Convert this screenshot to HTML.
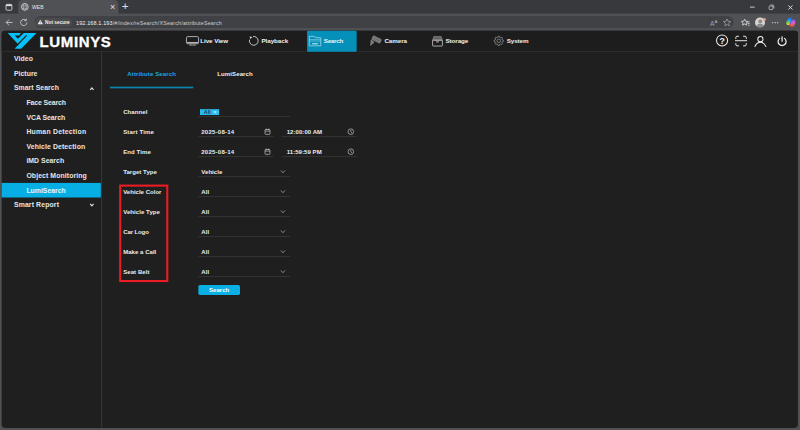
<!DOCTYPE html>
<html lang="en">
<head>
<meta charset="utf-8">
<title>WEB</title>
<style>
*{box-sizing:border-box;margin:0;padding:0}
html,body{width:800px;height:430px;overflow:hidden;background:#505155}
body{font-family:"Liberation Sans",sans-serif}
#root{position:absolute;left:0;top:0;width:1920px;height:1032px;transform:scale(0.4166667);transform-origin:0 0;background:#505155;overflow:hidden}
.abs{position:absolute}
/* browser chrome */
#tabstrip{left:0;top:0;width:1920px;height:33px;background:#38393c}
#tabicon{left:0;top:0;width:44px;height:32px}
#tab{left:44px;top:0;width:240px;height:34px;background:#505155;border-radius:10px 10px 0 0}
#toolbar{left:0;top:33px;width:1920px;height:43px;background:#505155}
#urlbar{left:81px;top:37px;width:1681px;height:32px;border-radius:16px;background:#404145;border:1.500px solid #5b5c60}
.ctext{color:#e8e8e8;font-size:14px;white-space:nowrap}
/* page */
#page{left:4.400px;top:74.400px;width:1910.400px;height:952.600px;background:#1f1f1f;border-radius:8px}
#header{left:4.400px;top:74.400px;width:1910.400px;height:49.600px;background:#1d1d1d;border-bottom:2.200px solid #3a3c3e;border-radius:8px 8px 0 0}
#side{left:4.400px;top:124px;width:240.300px;height:903px;border-right:2.400px solid #3b3d3f}
#brand{left:95px;top:80.500px;height:40px;line-height:40px;font-size:36px;font-weight:bold;color:#fff;letter-spacing:1.5px;-webkit-text-stroke:.7px #fff;white-space:nowrap}
#navact{left:736.500px;top:74px;width:119.500px;height:49.500px;background:#0590ba;border-radius:3px}
.tab{top:144.500px;width:200px;height:66px;line-height:66px;text-align:center;font-size:14.5px;font-weight:bold;letter-spacing:.25px;white-space:nowrap}
#redbox{left:285.800px;top:443.300px;width:118.500px;height:233.800px;border:5px solid #ec1c24}
#btn{left:476px;top:684px;width:100px;height:24px;line-height:24px;border-radius:4px;background:#0aafe4;color:#fff;font-size:14.5px;font-weight:bold;text-align:center}
.si{position:absolute;left:4.400px;width:237.800px;height:35px;line-height:35px;color:#e6e6e6;font-size:16.5px;font-weight:bold;letter-spacing:.3px;white-space:nowrap}
.si.l1{padding-left:29px}
.si.l2{padding-left:59px}
.si.act{background:#06aee3;color:#e8f7fd}
.nav{position:absolute;top:74px;height:50px;line-height:50px;color:#f0f0f0;font-size:15px;font-weight:bold;letter-spacing:-.15px;white-space:nowrap}
.lbl{position:absolute;left:295.5px;color:#ececec;font-size:14.5px;font-weight:bold;white-space:nowrap;height:20px;line-height:20px;letter-spacing:.1px}
.fld{position:absolute;height:28px;border-bottom:2px solid #3a3a3a}
.fld span{position:absolute;left:7px;top:5px;line-height:20px;font-size:14.5px;font-weight:bold;color:#ececec;white-space:nowrap;letter-spacing:.1px}
svg{position:absolute;overflow:visible}
</style>
</head>
<body>
<div id="root">
  <!-- browser chrome -->
  <div id="tabstrip" class="abs"></div>
  <div id="tab" class="abs"></div>
  <div id="toolbar" class="abs"></div>
  <div id="urlbar" class="abs"></div>
  <div id="chrome-items">
    <!-- tab actions icon -->
    <svg style="left:13px;top:8.500px" width="17" height="17" viewBox="0 0 18 18"><rect x="1.5" y="1.5" width="15" height="15" rx="3" fill="none" stroke="#e4e4e4" stroke-width="2"/><rect x="2" y="2" width="14" height="4" fill="#e4e4e4"/></svg>
    <!-- globe -->
    <svg style="left:50px;top:7px" width="19" height="19" viewBox="0 0 20 20"><circle cx="10" cy="10" r="8.600" fill="none" stroke="#e8e8e8" stroke-width="1.700"/><ellipse cx="10" cy="10" rx="3.800" ry="8.600" fill="none" stroke="#d8d8d8" stroke-width="1.100"/><path d="M1.500 10h17M3 5.800h14M3 14.200h14" stroke="#d8d8d8" stroke-width="1.100"/></svg>
    <div class="abs ctext" style="left:77px;top:8px;font-size:12px;line-height:18px">WEB</div>
    <div class="abs ctext" style="left:264px;top:3px;font-size:22px;line-height:26px;color:#e0e0e0">&#215;</div>
    <div class="abs ctext" style="left:292px;top:0px;font-size:28px;line-height:30px;color:#e0e0e0;font-weight:normal">+</div>
    <!-- back / reload -->
    <svg style="left:12px;top:44px" width="20" height="20" viewBox="0 0 20 20"><path d="M10 3L3 10l7 7M3 10h15" fill="none" stroke="#dcdcdc" stroke-width="1.8"/></svg>
    <svg style="left:46px;top:43px" width="22" height="22" viewBox="0 0 22 22"><path d="M18.5 11a7.5 7.5 0 1 1-2.4-5.5" fill="none" stroke="#dcdcdc" stroke-width="1.8"/><path d="M17 1.5v5h-5" fill="none" stroke="#dcdcdc" stroke-width="1.8"/></svg>
    <!-- not secure -->
    <div class="abs" style="left:84px;top:43px;width:89px;height:21px;border-radius:11px;background:#4a4b4f"></div>
    <svg style="left:89.500px;top:46px" width="13.500" height="13.500" viewBox="0 0 16 15"><path d="M8 1L15.5 14H0.5Z" fill="#f0f0f0"/><path d="M8 5.5v4.5M8 11.3v1.5" stroke="#4a4b4f" stroke-width="1.6"/></svg>
    <div class="abs ctext" style="left:108px;top:44px;font-size:11.5px;line-height:19px;font-weight:bold;color:#ececec">Not secure</div>
    <div class="abs ctext" style="left:182.500px;top:44.800px;font-size:13px;letter-spacing:.37px;line-height:19px;color:#f2f2f2">192.168.1.193<span style="color:#cdcdd0">/#/index/reSearch/XSearch/attributeSearch</span></div>
    <!-- right toolbar icons -->
    <div class="abs ctext" style="left:1704px;top:43px;font-size:16px;line-height:20px;color:#a4a4a7">A<span style="font-size:10px;vertical-align:6px;font-weight:bold">A</span></div>
    <svg style="left:1734px;top:43px" width="22" height="22" viewBox="0 0 22 22"><path d="M11 2.500l2.600 5.600 6 .700-4.500 4.100 1.200 6-5.300-3-5.300 3 1.200-6L2.400 8.800l6-.700z" fill="none" stroke="#a9a9ac" stroke-width="1.700" stroke-linejoin="round"/></svg>
    <svg style="left:1776px;top:43px" width="24" height="22" viewBox="0 0 24 22"><path d="M11 3l2.300 4.900 5.300.600-4 3.600 1.100 5.300-4.700-2.700-4.700 2.700 1.100-5.300-4-3.600 5.300-.600z" fill="none" stroke="#e4e4e4" stroke-width="1.900" stroke-linejoin="round"/><path d="M17 9.500h6M18 13.500h5M19 17.500h4" stroke="#e4e4e4" stroke-width="1.900"/></svg>
    <div class="abs" style="left:1812px;top:42px;width:24px;height:24px;border-radius:12px;background:#d6d2cf;overflow:hidden"><div class="abs" style="left:7.500px;top:4.500px;width:9px;height:9px;border-radius:5px;background:#8c8987"></div><div class="abs" style="left:3.500px;top:15px;width:17px;height:14px;border-radius:8px 8px 0 0;background:#8c8987"></div></div>
    <div class="abs" style="left:1831px;top:42.500px;width:7px;height:7px;border-radius:4px;background:#f29a8e"></div>
    <div class="abs" style="left:1853px;top:52.500px;width:3.200px;height:3.200px;border-radius:2px;background:#e0e0e0;box-shadow:6px 0 0 #e0e0e0,12px 0 0 #e0e0e0"></div>
    <svg style="left:1886px;top:42px" width="24" height="23" viewBox="0 0 24 23"><defs><linearGradient id="cpa" x1="0" y1="0" x2="0" y2="1"><stop offset="0" stop-color="#1a6cf0"/><stop offset=".4" stop-color="#22b0e0"/><stop offset=".65" stop-color="#5ccf50"/><stop offset="1" stop-color="#f4d21c"/></linearGradient><linearGradient id="cpb" x1="0" y1="0" x2="0" y2="1"><stop offset="0" stop-color="#8f5cf6"/><stop offset=".5" stop-color="#e45cc4"/><stop offset="1" stop-color="#f4582c"/></linearGradient></defs><path d="M7.500 2h7l-4.500 14.500H3.500L2 12z" fill="url(#cpa)" stroke="url(#cpa)" stroke-width="2.500" stroke-linejoin="round"/><path d="M14.500 6.500h6L22 11l-3.500 9.500h-7L10 18.500z" fill="url(#cpb)" stroke="url(#cpb)" stroke-width="2.500" stroke-linejoin="round"/><path d="M14 3.500L9.500 18" stroke="#1f58c8" stroke-width="1.600" fill="none"/></svg>
    <!-- window controls -->
    <div class="abs" style="left:1800px;top:15.500px;width:11px;height:2px;background:#e4e4e4"></div>
    <svg style="left:1845px;top:11px" width="13" height="13" viewBox="0 0 14 14"><rect x="1" y="3.500" width="9.500" height="9.500" rx="2" fill="none" stroke="#e4e4e4" stroke-width="1.700"/><path d="M4 1.200h6.500a2.500 2.500 0 0 1 2.500 2.500V10" fill="none" stroke="#e4e4e4" stroke-width="1.700"/></svg>
    <svg style="left:1891px;top:11.500px" width="12" height="12" viewBox="0 0 12 12"><path d="M1 1l10 10M11 1L1 11" stroke="#f4f4f4" stroke-width="2"/></svg>
  </div>

  <!-- page -->
  <div id="page" class="abs"></div>
  <div id="header" class="abs"></div>
  <div id="side" class="abs"></div>
  <div id="hdr">
    <!-- logo -->
    <svg style="left:14.4px;top:74.4px" width="81.6" height="48" viewBox="0 0 731 430"><polygon points="40,45 660,45 330,385 190,385 268,297 250,272" fill="#05c3fa"/><polygon points="328,40 392,40 260,172 192,98 287,98" fill="#1d1d1d"/><path d="M447,98L235,316" stroke="#1d1d1d" stroke-width="26"/></svg>
    <div class="abs" id="brand">LUMINYS</div>
    <div class="abs" id="navact"></div>
    <!-- nav icons -->
    <svg style="left:446px;top:85px" width="32" height="26" viewBox="0 0 32 26"><rect x="1.500" y="2.800" width="29" height="17.200" rx="3" fill="none" stroke="#c4c4c4" stroke-width="2"/><path d="M2 17.300h28" stroke="#c4c4c4" stroke-width="2.600"/><path d="M8 23.500h16M12 20v3.500M20 20v3.500" stroke="#b0b0b0" stroke-width="1.600"/></svg>
    <svg style="left:595.900px;top:85.300px" width="26" height="26" viewBox="0 0 26 26"><path d="M11.2,2.7A10.5,10.5 0 1 1 2.9,10.3" fill="none" stroke="#d2d2d2" stroke-width="2.200"/><path d="M3 2.500l6.500 1-4.500 5z" fill="#e0e0e0"/></svg>
    <svg style="left:741px;top:85.500px" width="30" height="26" viewBox="0 0 30 26"><path d="M1.200 24V1.200h12.300l2.500 3.300h12.800V24z" fill="none" stroke="#a9dced" stroke-width="1.800" stroke-linejoin="round"/><path d="M1.200 9h27.600M1.200 12.500h27.600" stroke="#a9dced" stroke-width="1.200"/><path d="M8 19h14" stroke="#a9dced" stroke-width="3"/></svg>
    <svg style="left:887px;top:85px" width="30" height="26" viewBox="0 0 30 26"><g transform="rotate(27 17 9.500)"><rect x="6.500" y="5" width="21" height="9.500" rx="1" fill="#555" stroke="#a2a2a2" stroke-width="1.500"/><path d="M7 8.200h20M7 11.400h20" stroke="#b0b0b0" stroke-width="1.100"/></g><path d="M3.500 10.500l-1 13.500 8.500-7.500z" fill="#777" stroke="#9a9a9a" stroke-width="1.200" stroke-linejoin="round"/></svg>
    <svg style="left:1037px;top:85.500px" width="26" height="26" viewBox="0 0 26 26"><path d="M4.500 1.500h17l3.300 9H1.200z" fill="#4c4c4c" stroke="#a8a8a8" stroke-width="1.300" stroke-linejoin="round"/><path d="M3.500 4.700h19M2.500 7.700h21" stroke="#a0a0a0" stroke-width="1"/><rect x="1.200" y="10.500" width="23.600" height="14" rx="1.500" fill="none" stroke="#c4c4c4" stroke-width="2"/><path d="M9.500 14.500h7" stroke="#c4c4c4" stroke-width="2.200"/></svg>
    <svg style="left:1184px;top:85.200px" width="26" height="26" viewBox="0 0 26 26"><path d="M21.6,10.9L24.2,11.5L24.2,14.5L21.6,15.1L20.5,17.6L22.0,19.9L19.9,22.0L17.6,20.5L15.1,21.6L14.5,24.2L11.5,24.2L10.9,21.6L8.4,20.5L6.1,22.0L4.0,19.9L5.5,17.6L4.4,15.1L1.8,14.5L1.8,11.5L4.4,10.9L5.5,8.4L4.0,6.1L6.1,4.0L8.4,5.5L10.9,4.4L11.5,1.8L14.5,1.8L15.1,4.4L17.6,5.5L19.9,4.0L22.0,6.1L20.5,8.4Z" fill="none" stroke="#a8a8a8" stroke-width="1.500" stroke-linejoin="round"/><circle cx="13" cy="13" r="4.200" fill="none" stroke="#a8a8a8" stroke-width="1.500"/></svg>
    <!-- right icons -->
    <svg style="left:1718px;top:82.200px" width="30" height="30" viewBox="0 0 30 30"><circle cx="15" cy="15" r="13.300" fill="none" stroke="#f2f2f2" stroke-width="2.400"/><text x="15" y="22.500" text-anchor="middle" font-family="Liberation Sans, sans-serif" font-weight="bold" font-size="21" fill="#f2f2f2">?</text></svg>
    <svg style="left:1764px;top:84.500px" width="29" height="27" viewBox="0 0 29 27"><g fill="none" stroke="#f0f0f0" stroke-width="2.300"><path d="M2 8.500V5a3 3 0 0 1 3-3h4.500M19.500 2H24a3 3 0 0 1 3 3v3.500M27 18.500V22a3 3 0 0 1-3 3h-4.500M9.500 25H5a3 3 0 0 1-3-3v-3.500"/><path d="M0 12.700h29"/></g></svg>
    <svg style="left:1810px;top:86px" width="30" height="27" viewBox="0 0 30 27"><g fill="none" stroke="#f0f0f0" stroke-width="2.400" stroke-linecap="round"><circle cx="15" cy="8" r="6.300"/><path d="M1.800 25.500C5 18.500 10 15.600 15 15.600s10 2.900 13.200 9.900"/></g></svg>
    <svg style="left:1864px;top:86px" width="26" height="26" viewBox="0 0 26 26"><g fill="none" stroke="#f0f0f0" stroke-width="3" stroke-linecap="round"><path d="M18.9,6.1A9.6,9.6 0 1 1 7.1,6.1"/><path d="M13 2.200v10.500"/></g></svg>
    <!-- nav -->
    <div class="nav" style="left:480.5px">Live View</div>
    <div class="nav" style="left:627.5px">Playback</div>
    <div class="nav" style="left:777px;letter-spacing:-.65px">Search</div>
    <div class="nav" style="left:922.5px">Camera</div>
    <div class="nav" style="left:1069px">Storage</div>
    <div class="nav" style="left:1216px">System</div>
  </div>
  <div id="sidebar">
    <div class="si l1" style="top:124px;letter-spacing:0.29px">Video</div>
    <div class="si l1" style="top:159px;letter-spacing:0.08px">Picture</div>
    <div class="si l1" style="top:194px;letter-spacing:0.15px">Smart Search</div>
    <div class="si l2" style="top:229px;letter-spacing:-0.22px">Face Search</div>
    <div class="si l2" style="top:264px;letter-spacing:-0.1px">VCA Search</div>
    <div class="si l2" style="top:299px;letter-spacing:0.54px">Human Detection</div>
    <div class="si l2" style="top:334px;letter-spacing:0.27px">Vehicle Detection</div>
    <div class="si l2" style="top:369px;letter-spacing:0.07px">iMD Search</div>
    <div class="si l2" style="top:404px;letter-spacing:0.22px">Object Monitoring</div>
    <div class="si l2 act" style="top:439px;letter-spacing:-0.02px">LumiSearch</div>
    <div class="si l1" style="top:474px;letter-spacing:0.32px">Smart Report</div>
    <svg style="left:215px;top:207.500px" width="11" height="9" viewBox="0 0 11 9"><path d="M1.500 7.500l4-4.500 4 4.500" fill="none" stroke="#e0e0e0" stroke-width="2.800"/></svg>
    <svg style="left:215px;top:487.500px" width="11" height="9" viewBox="0 0 11 9"><path d="M1.500 1.500l4 4.500 4-4.500" fill="none" stroke="#e0e0e0" stroke-width="2.800"/></svg>
  </div>
  <div id="content">
    <div class="abs tab" style="left:264px;color:#19a8dc">Attribute Search</div>
    <div class="abs tab" style="left:464px;color:#f0f0f0">LumiSearch</div>
    <div class="abs" style="left:264px;top:208.400px;width:200px;height:4px;background:#0c88b0"></div>
    <div class="lbl" style="top:257.5px;letter-spacing:0.17px">Channel</div>
    <div class="lbl" style="top:305.5px;letter-spacing:0.36px">Start Time</div>
    <div class="lbl" style="top:353.5px;letter-spacing:0.19px">End Time</div>
    <div class="lbl" style="top:401.5px;letter-spacing:0.1px">Target Type</div>
    <div class="lbl" style="top:449.5px;letter-spacing:0.01px">Vehicle Color</div>
    <div class="lbl" style="top:497.5px;letter-spacing:0.14px">Vehicle Type</div>
    <div class="lbl" style="top:545.5px;letter-spacing:-0.26px">Car Logo</div>
    <div class="lbl" style="top:593.5px;letter-spacing:0.06px">Make a Call</div>
    <div class="lbl" style="top:641.5px;letter-spacing:0.15px">Seat Belt</div>
    <div class="fld" style="left:476px;top:252.5px;width:220px"><div class="abs" style="left:4px;top:9px;width:46px;height:14px;background:#2abcee"></div><span style="left:13px;top:6px;color:#1d3b4c;font-size:13px">All</span><span style="left:35.500px;top:5px;color:#f4fcff;font-size:14px;font-weight:normal">&#215;</span></div>
    <div class="fld" style="left:476px;top:300.5px;width:180px"><span style="letter-spacing:.55px">2025-08-14</span><svg style="left:159px;top:7.500px" width="14" height="15.500" viewBox="0 0 14 14" preserveAspectRatio="none"><rect x="1" y="2.500" width="12" height="10.500" rx="2" fill="none" stroke="#d0d0d0" stroke-width="1.500"/><path d="M1 6h12M4 0.500v3M10 0.500v3" stroke="#d0d0d0" stroke-width="1.500"/></svg></div>
    <div class="fld" style="left:676px;top:300.5px;width:180px"><span style="left:12px">12:00:00 AM</span><svg style="left:158px;top:7.500px" width="16" height="16" viewBox="0 0 16 16"><circle cx="8" cy="8" r="6.700" fill="none" stroke="#d0d0d0" stroke-width="1.500"/><path d="M8 4v4.300l2.800 2.800" fill="none" stroke="#d0d0d0" stroke-width="1.500"/></svg></div>
    <div class="fld" style="left:476px;top:348.5px;width:180px"><span style="letter-spacing:.55px">2025-08-14</span><svg style="left:159px;top:7.500px" width="14" height="15.500" viewBox="0 0 14 14" preserveAspectRatio="none"><rect x="1" y="2.500" width="12" height="10.500" rx="2" fill="none" stroke="#d0d0d0" stroke-width="1.500"/><path d="M1 6h12M4 0.500v3M10 0.500v3" stroke="#d0d0d0" stroke-width="1.500"/></svg></div>
    <div class="fld" style="left:676px;top:348.5px;width:180px"><span style="left:12px">11:59:59 PM</span><svg style="left:158px;top:7.500px" width="16" height="16" viewBox="0 0 16 16"><circle cx="8" cy="8" r="6.700" fill="none" stroke="#d0d0d0" stroke-width="1.500"/><path d="M8 4v4.300l2.800 2.800" fill="none" stroke="#d0d0d0" stroke-width="1.500"/></svg></div>
    <div class="fld" style="left:476px;top:396.5px;width:220px"><span>Vehicle</span><svg style="left:197px;top:11.500px" width="12" height="8" viewBox="0 0 12 8"><path d="M1 1l5 5.500 5-5.500" fill="none" stroke="#c8c8c8" stroke-width="1.500"/></svg></div>
    <div class="fld" style="left:476px;top:444.5px;width:220px"><span>All</span><svg style="left:197px;top:11.500px" width="12" height="8" viewBox="0 0 12 8"><path d="M1 1l5 5.500 5-5.500" fill="none" stroke="#c8c8c8" stroke-width="1.500"/></svg></div>
    <div class="fld" style="left:476px;top:492.5px;width:220px"><span>All</span><svg style="left:197px;top:11.500px" width="12" height="8" viewBox="0 0 12 8"><path d="M1 1l5 5.500 5-5.500" fill="none" stroke="#c8c8c8" stroke-width="1.500"/></svg></div>
    <div class="fld" style="left:476px;top:540.5px;width:220px"><span>All</span><svg style="left:197px;top:11.500px" width="12" height="8" viewBox="0 0 12 8"><path d="M1 1l5 5.500 5-5.500" fill="none" stroke="#c8c8c8" stroke-width="1.500"/></svg></div>
    <div class="fld" style="left:476px;top:588.5px;width:220px"><span>All</span><svg style="left:197px;top:11.500px" width="12" height="8" viewBox="0 0 12 8"><path d="M1 1l5 5.500 5-5.500" fill="none" stroke="#c8c8c8" stroke-width="1.500"/></svg></div>
    <div class="fld" style="left:476px;top:636.5px;width:220px"><span>All</span><svg style="left:197px;top:11.500px" width="12" height="8" viewBox="0 0 12 8"><path d="M1 1l5 5.500 5-5.500" fill="none" stroke="#c8c8c8" stroke-width="1.500"/></svg></div>
    <div class="abs" id="redbox"></div>
    <div class="abs" id="btn">Search</div>
  </div>
</div>
</body>
</html>
